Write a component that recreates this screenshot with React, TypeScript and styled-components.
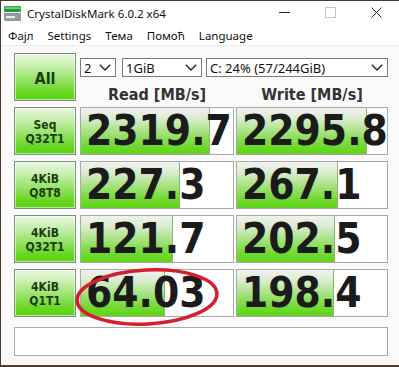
import React from "react";
import styled, { createGlobalStyle } from "styled-components";

const Global = createGlobalStyle`
  html, body { margin: 0; padding: 0; background: #fff; }
  * { box-sizing: border-box; }
`;

const Window = styled.div`
  position: relative;
  width: 399px;
  height: 367px;
  border-top: 1px solid #4a3b30;
  border-left: 1px solid #4a3b30;
  border-bottom: 2px solid #4a3b30;
  background: #fafafa;
  display: flex;
  flex-direction: column;
  overflow: hidden;
  font-family: "Noto Sans", "Liberation Sans", sans-serif;
`;

const TitleBar = styled.div`
  height: 25px;
  background: #fff;
  display: flex;
  align-items: center;
  padding-left: 3px;
  color: #111;
  font-size: 11.5px;
`;

const TitleText = styled.span`
  margin-left: 6px;
  margin-top: -1px;
`;

const Controls = styled.div`
  margin-left: auto;
  display: flex;
  height: 100%;
`;

const ControlBtn = styled.div`
  width: 46px;
  height: 100%;
  display: flex;
  align-items: center;
  justify-content: center;
  padding-bottom: 3px;
`;

const MenuBar = styled.div`
  height: 20px;
  background: #fff;
  display: flex;
  align-items: center;
  padding-left: 0px;
  font-size: 11.5px;
  color: #111;
  border-bottom: 1px solid #ececec;
`;

const MenuItem = styled.span`
  padding: 0 7px;
`;

const Content = styled.div`
  padding: 7px 0 0 13px;
  display: flex;
  flex-direction: column;
`;

const Grid = styled.div`
  display: grid;
  grid-template-columns: 62px 4px 154px 2px 152px;
  grid-auto-rows: 48px;
  row-gap: 6px;
`;

const LabelButton = styled.div<{ $big?: boolean }>`
  grid-column: 1;
  border: 1px solid #7f8f7f;
  box-shadow: inset 0 0 0 1px rgba(255, 255, 255, 0.55);
  background: linear-gradient(
    to bottom,
    #eaf7e2 0%,
    #c4eeaa 28%,
    #8fe15e 60%,
    #66d61f 85%,
    #5ad212 100%
  );
  display: flex;
  flex-direction: column;
  align-items: center;
  justify-content: center;
  color: #1d3c10;
  font-family: "DejaVu Sans Condensed", "DejaVu Sans", sans-serif;
  font-stretch: condensed;
  font-weight: bold;
  font-size: ${(p) => (p.$big ? "16px" : "12px")};
  line-height: 14px;
  padding-top: ${(p) => (p.$big ? "3px" : "1px")};
`;

const TopPanel = styled.div`
  grid-column: 3 / 6;
  display: grid;
  grid-template-columns: 154px 2px 152px;
  grid-template-rows: 19px 20px;
  row-gap: 8px;
  padding-top: 5px;
`;

const SelectRow = styled.div`
  grid-column: 1 / 4;
  display: flex;
`;

const Select = styled.div<{ $w: number; $gap: number }>`
  width: ${(p) => p.$w}px;
  margin-left: ${(p) => p.$gap}px;
  height: 19px;
  border: 1px solid #7a7a7a;
  background: #fff;
  display: flex;
  align-items: center;
  justify-content: space-between;
  padding: 0 4px 0 3px;
  font-size: 13px;
  color: #111;
  white-space: nowrap;
`;

const Header = styled.div<{ $col: number }>`
  grid-column: ${(p) => p.$col};
  text-align: center;
  font-family: "DejaVu Sans Condensed", "DejaVu Sans", sans-serif;
  font-stretch: condensed;
  font-weight: bold;
  font-size: 16px;
  line-height: 20px;
  color: #333;
`;

const Cell = styled.div<{ $col: number }>`
  grid-column: ${(p) => p.$col};
  position: relative;
  border: 1px solid #a9a9a9;
  background: #fff;
  padding-left: 5px;
  font-family: "DejaVu Sans Condensed", "DejaVu Sans", sans-serif;
  font-stretch: condensed;
  font-weight: bold;
  font-size: 42px;
  line-height: 46px;
  color: #1b1b1b;
  white-space: nowrap;
`;

const Fill = styled.div`
  position: absolute;
  left: 0;
  top: 0;
  bottom: 0;
  border-right: 1px solid #86b872;
  background: linear-gradient(
    to bottom,
    #f1f2ef 0%,
    #dcecd2 22%,
    #a9e385 50%,
    #76da38 78%,
    #5fd416 100%
  );
`;

const Value = styled.span`
  position: relative;
`;

const Status = styled.div`
  margin-top: 10px;
  width: 374px;
  height: 29px;
  border: 1px solid #a9a9a9;
  background: #fff;
`;

const Mark = styled.svg`
  position: absolute;
  left: 71px;
  top: 264px;
  pointer-events: none;
`;

const Chevron = () => (
  <svg width="12" height="7" viewBox="0 0 12 7">
    <path d="M0.8 0.8 L6 6 L11.2 0.8" fill="none" stroke="#222" strokeWidth="1.4" />
  </svg>
);

const rows = [
  { l1: "Seq", l2: "Q32T1", r: "2319.7", rw: 129, w: "2295.8", ww: 130 },
  { l1: "4KiB", l2: "Q8T8", r: "227.3", rw: 99, w: "267.1", ww: 101 },
  { l1: "4KiB", l2: "Q32T1", r: "121.7", rw: 92, w: "202.5", ww: 98 },
  { l1: "4KiB", l2: "Q1T1", r: "64.03", rw: 84, w: "198.4", ww: 97 },
];

export default function App() {
  return (
    <>
      <Global />
      <Window>
        <TitleBar>
          <svg width="17" height="15" viewBox="0 0 17 15">
            <rect x="0" y="0" width="17" height="6" fill="#2fae45" />
            <rect x="1" y="1.5" width="15" height="1.2" fill="#8fe08f" />
            <rect x="1" y="3.8" width="15" height="1" fill="#1d7a2c" />
            <rect x="0" y="7" width="17" height="8" fill="#8d9c9c" />
            <rect x="2" y="10" width="9" height="2.2" fill="#e6eeee" />
          </svg>
          <TitleText>CrystalDiskMark 6.0.2 x64</TitleText>
          <Controls>
            <ControlBtn>
              <svg width="11" height="11" viewBox="0 0 11 11">
                <path d="M0 5.5 H11" stroke="#222" strokeWidth="1" />
              </svg>
            </ControlBtn>
            <ControlBtn>
              <svg width="11" height="11" viewBox="0 0 11 11">
                <rect x="0.5" y="0.5" width="10" height="10" fill="none" stroke="#c4c4c4" strokeWidth="1" />
              </svg>
            </ControlBtn>
            <ControlBtn>
              <svg width="11" height="11" viewBox="0 0 11 11">
                <path d="M0.5 0.5 L10.5 10.5 M10.5 0.5 L0.5 10.5" stroke="#222" strokeWidth="1" />
              </svg>
            </ControlBtn>
          </Controls>
        </TitleBar>
        <MenuBar>
          <MenuItem>Фајл</MenuItem>
          <MenuItem>Settings</MenuItem>
          <MenuItem>Тема</MenuItem>
          <MenuItem>Помоћ</MenuItem>
          <MenuItem>Language</MenuItem>
        </MenuBar>
        <Content>
          <Grid>
            <LabelButton $big>All</LabelButton>
            <TopPanel>
              <SelectRow>
                <Select $w={36} $gap={0}>
                  <span>2</span>
                  <Chevron />
                </Select>
                <Select $w={80} $gap={6}>
                  <span>1GiB</span>
                  <Chevron />
                </Select>
                <Select $w={182} $gap={4}>
                  <span>C: 24% (57/244GiB)</span>
                  <Chevron />
                </Select>
              </SelectRow>
              <Header $col={1}>Read [MB/s]</Header>
              <Header $col={3}>Write [MB/s]</Header>
            </TopPanel>
            {rows.map((r, i) => (
              <React.Fragment key={i}>
                <LabelButton>
                  <span>{r.l1}</span>
                  <span>{r.l2}</span>
                </LabelButton>
                <Cell $col={3}>
                  <Fill style={{ width: r.rw }} />
                  <Value>{r.r}</Value>
                </Cell>
                <Cell $col={5}>
                  <Fill style={{ width: r.ww }} />
                  <Value>{r.w}</Value>
                </Cell>
              </React.Fragment>
            ))}
          </Grid>
          <Status />
        </Content>
        <Mark width="152" height="66" viewBox="0 0 152 66">
          <ellipse
            cx="75"
            cy="32"
            rx="70"
            ry="27"
            fill="none"
            stroke="#d61e2c"
            strokeWidth="3.6"
            transform="rotate(-3 75 32)"
          />
        </Mark>
      </Window>
    </>
  );
}
